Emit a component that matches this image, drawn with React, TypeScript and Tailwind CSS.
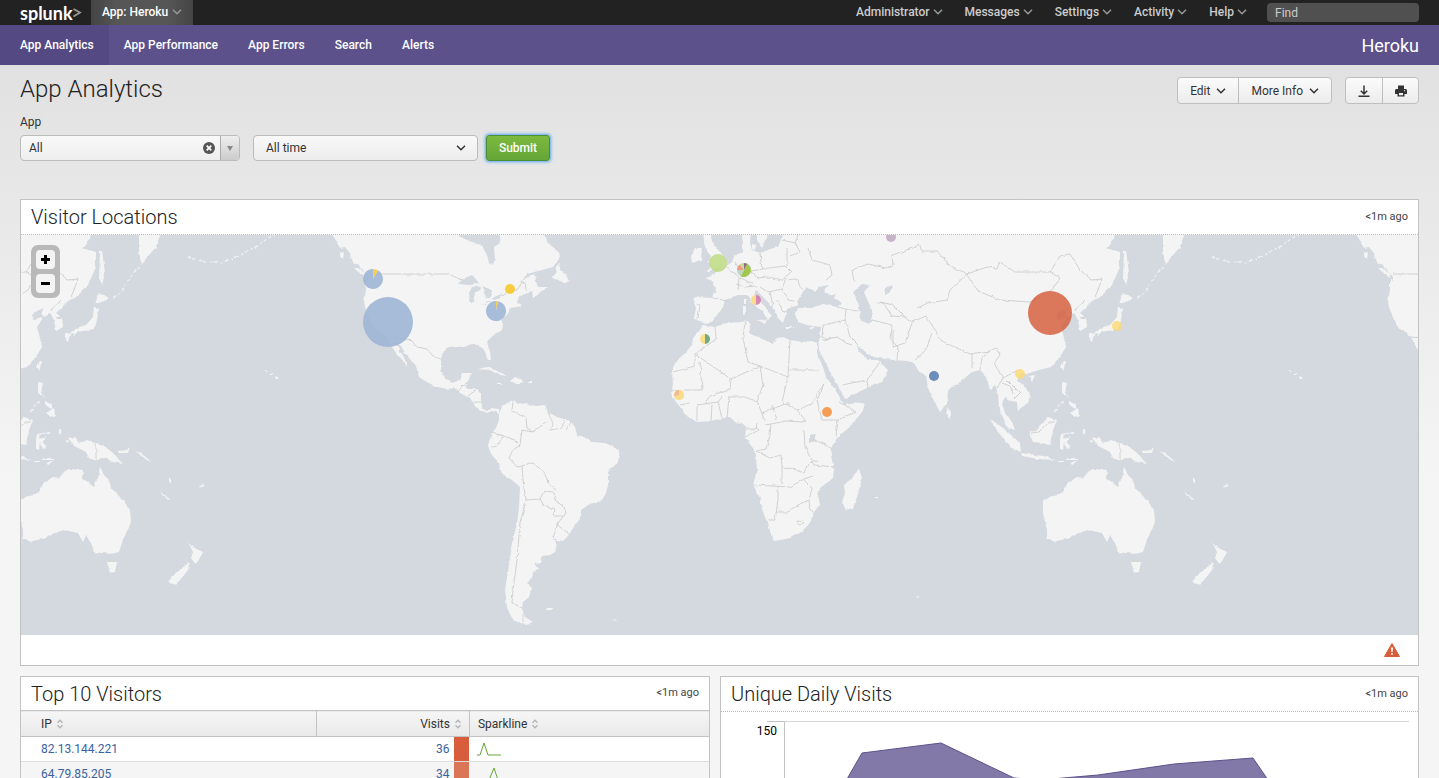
import React from "react";

const LAND = [
  // North and Central America
  "M325 225L333 235L337 243L340 248L345 247L349 252L353 262L359 266L363 270L366 275L366 290L364 302L366 310L370 320L377 330L382 332L387 337L391 345L394 350L397 355L402 360L407 367L406 362L402 354L398 347L395 342L398 343L402 348L408 357L416 366L419 377L427 382L437 387L447 389L455 388L460 393L468 397L473 402L476 407L482 411L487 413L492 411L496 412L499 414L499 409L491 408L487 411L482 407L481 400L481 393L477 389L468 389L465 387L468 380L472 373L463 373L460 380L452 383L445 378L441 370L441 360L443 352L450 347L463 347L472 344L482 346L485 352L488 360L491 359L490 352L487 342L492 336L502 330L503 325L502 318L507 315L510 308L517 307L522 305L517 302L519 297L525 294L532 292L533 297L540 293L548 287L542 287L536 285L535 280L538 277L533 275L526 278L519 285L527 274L542 270L553 267L558 260L560 255L553 247L547 242L543 225Z",
  "M558 263L556 273L551 279L560 280L567 283L569 281L565 273L561 270Z",
  "M354 268L358 268L369 276L369 280L363 276Z",
  "M340 251L344 253L343 259L340 255Z",
  "M478 369L487 367L497 371L507 376L499 375L490 370Z",
  "M510 381L515 377L520 379L524 382L516 384Z",
  "M497 383h5v1h-5ZM528 382h4v1h-4Z",
  // South America
  "M499 413L502 407L508 402L514 400L518 403L525 404L537 406L545 405L548 412L557 417L570 421L575 427L577 435L585 437L593 442L605 443L612 446L618 450L620 455L618 462L608 472L608 485L606 493L602 500L588 505L581 510L581 518L575 525L568 536L563 541L557 540L553 538L557 545L555 552L550 555L542 556L542 562L534 563L538 569L533 572L532 578L527 583L532 588L529 597L523 602L522 608L525 617L533 622L525 625L513 620L507 608L505 590L507 577L510 560L511 548L517 523L519 507L520 487L512 480L503 475L498 463L490 452L488 445L492 433L496 428L499 420Z",
  "M547 608h7l-3 2l-5 0ZM612 618l4 2l1 2Z",
  // Africa
  "M703 325L715 327L727 323L740 322L748 321L750 328L749 333L760 338L773 344L777 338L783 337L790 340L803 342L812 341L817 343L817 353L823 367L826 377L832 385L837 393L842 401L845 405L855 403L864 402L862 412L852 425L837 438L830 450L832 460L834 470L833 478L820 488L818 495L820 505L813 513L810 523L800 533L790 538L775 541L771 535L768 523L763 513L760 498L753 485L757 470L756 455L753 448L745 438L746 427L742 423L735 422L730 417L723 418L710 421L697 422L688 417L680 407L673 398L671 393L673 385L672 372L675 363L685 353L692 345L693 338L700 330Z",
  "M859 469L862 478L857 497L853 508L846 510L842 502L845 493L844 485L852 478Z",
  // Europe and Asia
  "M695 297L713 298L716 288L713 282L706 278L712 276L715 273L725 267L732 262L735 255L743 252L743 243L742 237L745 225L751 225L750 243L752 250L760 253L773 248L778 247L782 237L783 225L1118 225L1115 235L1110 245L1105 248L1120 252L1120 267L1112 285L1100 297L1092 301L1085 308L1080 313L1086 318L1087 327L1080 331L1078 320L1074 313L1067 317L1066 308L1061 311L1056 315L1058 320L1067 318L1061 327L1064 338L1066 347L1059 358L1051 367L1043 369L1032 372L1027 375L1020 374L1017 380L1023 385L1030 395L1028 403L1018 410L1017 403L1012 402L1005 397L1002 403L1005 413L1012 422L1015 430L1007 427L1003 417L999 408L998 393L995 385L990 390L988 382L983 373L980 370L972 372L960 382L948 390L947 403L940 412L935 403L928 388L926 375L920 373L915 365L908 361L893 360L873 357L860 348L856 345L862 355L868 360L878 360L888 370L882 382L867 388L845 399L842 393L833 377L823 358L818 348L819 342L821 327L807 325L798 322L795 313L797 308L812 308L823 304L837 307L842 303L830 295L824 291L828 285L819 287L815 292L807 287L803 292L798 300L798 305L793 307L787 310L785 317L783 323L778 318L775 310L767 301L760 294L757 290L754 295L763 305L772 315L767 320L763 312L753 303L747 295L738 295L732 297L725 300L723 307L717 315L712 322L703 323L694 318L696 308L693 300Z",
  "M703 225L712 225L711 238L715 247L722 254L726 260L725 267L716 269L706 272L712 266L708 262L711 256L706 250L704 243Z",
  "M695 248L702 248L701 260L692 263L691 256Z",
  "M757 225L772 225L768 236L762 247L757 240ZM752 244l4 1l-1 5l-3 -1Z",
  "M743 306l3 0l0 7l-3 1ZM744 299l2 0l0 5l-2 -1ZM758 320l9 -1l-2 5ZM785 327h9v1h-8ZM809 328l6 -2l-3 4Z",
  "M1124 250L1126 250L1129 273L1126 285L1123 279Z",
  "M1123 293L1133 298L1126 302L1119 304Z",
  "M1118 307L1123 308L1121 320L1118 329L1107 331L1093 334L1100 328L1110 325L1117 317Z",
  "M1089 333l5 1l-2 8l-3 -3ZM1097 332l5 0l-4 3Z",
  "M1163 225L1163 250L1165 265L1173 255L1180 247L1184 235L1183 225Z",
  "M1064 361l2 0l-3 10l-3 -4ZM1029 376l6 -1l-3 7ZM948 407l4 7l-3 4l-3 -4Z",
  // South-east Asia
  "M990 419L1002 427L1020 443L1021 452L1012 448L998 432Z",
  "M1021 453L1043 456L1057 460L1037 459L1022 456Z",
  "M1029 432L1036 431L1048 417L1057 420L1053 430L1050 445L1043 443L1033 442Z",
  "M1062 382L1067 383L1065 393L1070 398L1062 393ZM1070 413L1078 408L1079 417L1074 416Z",
  "M1069 400l3 3l4 1l0 5l-4 -2l-3 -3Z",
  "M1061 434l13 -2l0 2l-11 1l1 4l6 -2l-3 4l3 7l-3 1l-3 -7l-1 7l-3 0l0 -9Z",
  "M1092 438L1099 437L1104 443L1111 440L1127 445L1137 453L1147 464L1137 462L1127 457L1120 461L1113 458L1110 452L1098 446Z",
  "M1142 451l9 -1l3 -4l-2 7l-9 0ZM1159 450l5 3l6 4l6 6l-5 -3l-6 -4ZM1083 429l2 0l-1 6l-1 -1ZM1058 461h7v1h-7ZM1066 459h12v1h-12ZM1070 463l8 -3l-5 4Z",
  // Oceania
  "M1043 500L1052 497L1063 492L1068 483L1077 477L1083 478L1088 472L1093 469L1107 470L1106 478L1118 486L1122 478L1124 466L1128 475L1133 480L1135 488L1147 500L1154 510L1155 522L1147 540L1143 552L1133 554L1118 552L1115 543L1110 535L1107 542L1102 533L1088 530L1073 535L1068 538L1055 542L1047 538L1047 530L1043 513Z",
  "M1131 562L1141 562L1139 572L1134 573Z",
  "M1211 540L1216 547L1227 552L1220 565L1215 558L1217 552Z",
  "M1214 562L1212 570L1200 585L1193 583L1195 578L1207 567Z",
  "M1185 493l9 6l-1 1l-8 -6ZM1223 486l4 -2l1 2l-4 2ZM1193 477l2 3l0 4l-2 -3ZM877 379h2v1h-2ZM875 496h3v1h-3ZM915 597h4v1h-3Z",
  "M1299 376l3 1l0 2l-2 0ZM1289 370h2v1h-2ZM1294 373h3v1h-3Z",
];

const WATER = [
  "M455 225L457 235L467 240L482 246L487 255L489 263L493 264L495 260L494 247L500 243L501 225Z",
  "M457 284L465 278L472 275L479 283L470 285Z",
  "M470 304L469 292L472 287L481 286L480 291L475 292L473 302Z",
  "M482 286L492 290L491 295L486 299L485 291ZM481 305L489 301L492 301L485 304ZM492 298L502 294L501 298L493 300Z",
  "M853 292L862 284L870 285L864 292L867 299L872 310L872 322L866 323L860 320L859 305Z",
  "M885 289l6 -4l1 3l-3 5l-4 2ZM809 435l7 -1l-2 7l-5 2ZM836 294l-7 2l4 3Z",
];

const BORDERS = [
  "M369 274H449L457 278L463 280M502 296L508 292L518 289L521 283L525 282L526 291",
  "M387 337L401 338L411 340L417 347L427 349L434 357L441 359M458 392L463 385L467 383M468 396L476 390M474 402L481 402",
  "M513 402L512 411L526 418L527 428L533 432L545 423L548 422M548 412L553 424L551 430L562 428L564 421M566 430L571 421M533 432L522 430L520 445L513 450L509 458L517 467L522 466L523 480L526 500L540 499L544 491L554 492L555 500L564 507L566 513L558 523L553 538M522 466L532 462L546 474L548 483L556 490M540 499L544 506L555 510L553 516L563 516M556 524L569 534M526 501L520 523L517 560L513 590L512 603L522 608M492 432L504 436L515 440L520 445M504 436L497 446L491 447M523 613L523 622",
  "M715 327L716 339L695 354L695 366L673 372M695 354L731 379L760 366L788 377L790 340M790 370H819M700 362L702 390H684M731 379L730 389L710 396L704 404L696 405M745 322L743 338L748 362L760 366M760 366L763 385L757 402L762 413L785 404L790 404M788 377L782 402L797 410L812 404L818 392L824 385M757 402L745 397L729 397L727 418M722 418L718 402M697 421L697 405M711 421L712 405M704 404L718 402L722 397M745 437L759 430L756 427M746 429H756L757 423M762 413L765 425L771 424L785 421L802 422L806 421L797 410M824 385L817 400L822 420L838 420L856 412L840 402M838 420L836 436M756 451L766 449L770 435L771 424M756 451L770 458L781 455L782 467L793 469L804 473L808 463L818 461M804 430L805 447L814 465L834 467M813 439L831 448M753 485L790 487L804 479L813 476M782 467V484M778 487V500L775 520H768M776 512L788 512L800 504L809 500L812 488L804 480M809 500L810 509L813 513M798 521l5 1l-3 4l-3 -2ZM772 405L777 420M680 405L690 403M671 390L682 391",
  "M697 303L700 305L698 318M713 298L727 301M725 266L739 277L738 291M739 277L753 284M735 262L740 270M760 253L762 269L752 271L757 278L768 277L782 280L791 272L785 266L762 269M787 248L787 266M782 240L795 243L800 252L790 256M795 243L800 230M808 248L812 260L830 265L832 275L826 280M785 281L782 289L768 292M782 289L788 300L799 302M770 292L773 306M777 300L783 312L790 308M782 280L797 279L802 290M737 284L745 287L757 286M760 287L768 292M837 307L846 309L845 320L823 325M846 309L858 311M845 320L850 337L858 345M823 340L837 337L846 343L852 345M842 385L867 380L868 388M867 380L880 362M823 325L822 337L829 340M872 320L892 325L891 340L898 347L897 360M877 303L883 303L892 316L905 317M854 282L852 270L868 264L886 268L893 265L892 255L905 251L919 245L922 251L937 251L949 265L967 274L987 267L997 268L1000 262L1015 272L1050 272L1060 278L1052 290L1030 302L1000 300L978 291L967 274M967 274L950 290L947 300L928 303L917 308M880 302L893 305L904 316L912 322L926 316L933 327L940 340L950 345L970 354L990 351L996 348L1000 355M893 330L893 347L905 343L912 323M915 360L926 350L932 333M972 354L972 368M980 370L982 358L990 351M1000 355L994 363L998 370L1003 378L997 388M1003 378L1018 370M1007 380L1020 393L1013 400M1002 383L1010 386L1013 393M1050 272L1060 256L1070 254L1080 270L1092 280L1102 279L1098 290L1095 297M1085 301L1075 310M1080 318L1086 317",
  "M1031 433L1039 432L1048 422L1055 422M1120 443V461",
];

const ISLANDS = "M1300 233L1283 245L1263 256L1247 262L1230 262L1210 257M1137 298L1145 292L1158 272L1165 266M1054 412L1060 405L1064 400M1090 440L1096 444";

function World({ dx }: { dx: number }) {
  return (
    <g transform={`translate(${dx} 0)`}>
      <g filter="url(#coast)">
        <path d={LAND.join("")} fill="#f4f4f4" />
        <path d={WATER.join("")} fill="#d4d8df" />
        <path d={BORDERS.join("")} fill="none" stroke="#cdcdcd" strokeWidth="0.9" />
        <path d={ISLANDS} fill="none" stroke="#eff0f2" strokeWidth="1.5" strokeDasharray="4 2 2 3" />
      </g>
    </g>
  );
}

type Slice = [number, string];

function Pie({ x, y, r, slices, opacity = 0.85 }: { x: number; y: number; r: number; slices: Slice[]; opacity?: number }) {
  if (slices.length === 1) return <circle cx={x} cy={y} r={r} fill={slices[0][1]} fillOpacity={opacity} />;
  let start = 0;
  return (
    <g fillOpacity={opacity}>
      {slices.map(([share, color], i) => {
        const a = start * 2 * Math.PI;
        start += share;
        const b = start * 2 * Math.PI;
        const d = `M${x} ${y}L${x + r * Math.sin(a)} ${y - r * Math.cos(a)}A${r} ${r} 0 ${share > 0.5 ? 1 : 0} 1 ${x + r * Math.sin(b)} ${y - r * Math.cos(b)}Z`;
        return <path key={i} d={d} fill={color} />;
      })}
    </g>
  );
}

const YELLOW = "#fcd975";
const BLUE = "#a0b6d5";
const MARKERS: { x: number; y: number; r: number; slices: Slice[]; opacity?: number }[] = [
  { x: 373, y: 279, r: 10, slices: [[0.09, "#f3cb4d"], [0.91, BLUE]], opacity: 0.92 },
  { x: 388, y: 322, r: 25, slices: [[1, BLUE]], opacity: 0.92 },
  { x: 496, y: 311, r: 10, slices: [[0.03, "#f3cb4d"], [0.97, BLUE]], opacity: 0.92 },
  { x: 510, y: 289, r: 5, slices: [[1, "#fac61c"]] },
  { x: 718, y: 263, r: 9, slices: [[1, "#bedb81"]] },
  { x: 744, y: 270, r: 7, slices: [[0.08, "#87597a"], [0.5, "#9ac23c"], [0.17, "#b5d5c0"], [0.15, "#f0917a"], [0.1, "#bedb81"]], opacity: 0.9 },
  { x: 756, y: 300, r: 5, slices: [[0.5, "#d377ac"], [0.5, YELLOW]] },
  { x: 705, y: 339, r: 5, slices: [[0.5, "#5aa06d"], [0.5, YELLOW]] },
  { x: 679, y: 395, r: 5, slices: [[0.7, YELLOW], [0.3, "#f7ae76"]] },
  { x: 827, y: 412, r: 5, slices: [[1, "#f58f39"]] },
  { x: 891, y: 237, r: 5, slices: [[1, "#bda7bf"]] },
  { x: 934, y: 376, r: 5, slices: [[1, "#5479af"]] },
  { x: 1020, y: 374, r: 5, slices: [[1, YELLOW]] },
  { x: 1117, y: 326, r: 5, slices: [[1, YELLOW]] },
  { x: 1050, y: 313, r: 22, slices: [[1, "#d65d3a"]], opacity: 0.82 },
];

function Chevron({ className = "" }: { className?: string }) {
  return (
    <svg viewBox="0 0 10 6" className={`h-[6px] w-[10px] shrink-0 ${className}`} fill="none" stroke="currentColor" strokeWidth="1.5" aria-hidden="true">
      <path d="M1 0.8L5 4.8L9 0.8" />
    </svg>
  );
}

function SortIcon() {
  return (
    <svg viewBox="0 0 8 10" className="h-[10px] w-[8px]" fill="none" stroke="#b5b5b5" strokeWidth="1.4" aria-hidden="true">
      <path d="M1.5 3.7L4 1.2L6.5 3.7M1.5 6.3L4 8.8L6.5 6.3" />
    </svg>
  );
}

function PanelHeader({ title, ruled = true }: { title: string; ruled?: boolean }) {
  return (
    <div className={`flex items-center justify-between px-[10px] ${ruled ? "h-[35px] border-b border-dotted border-[#b8b8b8]" : "h-[33px]"}`}>
      <h2 className="text-[20px] leading-6 font-light text-[#222]">{title}</h2>
      <span className="text-[11px] text-[#444]">&lt;1m ago</span>
    </div>
  );
}

const MENUS = ["Administrator", "Messages", "Settings", "Activity", "Help"];
const TABS = ["App Performance", "App Errors", "Search", "Alerts"];
const VISITORS = [
  { ip: "82.13.144.221", visits: 36, heat: "bg-[#d85d3c]", row: "bg-white", line: "M0 13H3L7 1L11 13H24" },
  { ip: "64.79.85.205", visits: 34, heat: "bg-[#db7558]", row: "bg-[#f5f5f5]", line: "M0 13H12L17 1L21 13H24" },
];

export default function App() {
  return (
    <div className="flex h-screen flex-col overflow-hidden bg-[#f5f5f5] bg-[linear-gradient(#dedede,#f5f5f5_480px)] font-[Roboto,sans-serif] text-[12px] text-[#333]">
      <header className="flex h-[25px] shrink-0 items-center justify-between bg-[#222] pr-5 pl-5">
        <div className="flex h-full items-center">
          <a href="#home" aria-label="splunk" className="flex h-full w-[71px] items-center text-white">
            <span className="font-[Lato,sans-serif] text-[18px] leading-5 font-bold">splunk</span>
            <svg viewBox="0 0 9 11" className="h-[11px] w-[9px] shrink-0" fill="none" stroke="#999" strokeWidth="1.8" aria-hidden="true">
              <path d="M0.5 2L7 5.5L0.5 9.5" />
            </svg>
          </a>
          <button type="button" className="flex h-full items-center gap-1 bg-[linear-gradient(90deg,#444,#565656_25%,#565656_75%,#444)] px-[11px] pb-px font-medium text-white">
            App: Heroku <Chevron className="text-[#999]" />
          </button>
        </div>
        <div className="flex items-center gap-5">
          <div className="flex items-center gap-[22px] pb-[2px]">
            {MENUS.map((m) => (
              <button key={m} type="button" className="flex items-center gap-[3px] font-medium text-[#ccc]">
                {m} <Chevron className="text-[#999]" />
              </button>
            ))}
          </div>
          <input aria-label="Find" placeholder="Find" className="h-[19px] w-[152px] rounded-[4px] bg-[#505050] px-2 text-[12px] text-white placeholder:text-[#ccc]" />
        </div>
      </header>

      <nav className="flex h-10 shrink-0 items-center bg-[#5c518b] text-white">
        <a href="#analytics" className="flex h-full items-center bg-[#544982] pr-[15px] pl-5 font-medium">App Analytics</a>
        {TABS.map((t) => (
          <a key={t} href="#tab" className="px-[15px] font-medium">{t}</a>
        ))}
        <span className="ml-auto pr-5 text-[18px]">Heroku</span>
      </nav>

      <main className="px-5">
        <div className="flex items-start justify-between pt-3">
          <h1 className="text-[24px] leading-6 font-light text-[#222]">App Analytics</h1>
          <div className="flex gap-[13px]">
            <div className="flex h-[27px] overflow-hidden rounded-[4px] border border-[#bfbfbf] bg-linear-to-b from-[#fbfbfb] to-[#ececec]">
              <button type="button" className="flex items-center gap-[6px] px-3">Edit <Chevron /></button>
              <button type="button" className="flex items-center gap-[6px] border-l border-[#bfbfbf] px-3">More Info <Chevron /></button>
            </div>
            <div className="flex h-[27px] overflow-hidden rounded-[4px] border border-[#bfbfbf] bg-linear-to-b from-[#fbfbfb] to-[#ececec]">
              <button type="button" aria-label="Export" className="flex w-9 items-center justify-center">
                <svg viewBox="0 0 12 12" className="size-3" fill="none" stroke="#333" strokeWidth="1.5" aria-hidden="true">
                  <path d="M6 0.5V9M2.8 5.8L6 9L9.2 5.8M0.5 11.2H11.5" />
                </svg>
              </button>
              <button type="button" aria-label="Print" className="flex w-9 items-center justify-center border-l border-[#bfbfbf]">
                <svg viewBox="0 0 12 12" className="size-3" fill="#333" aria-hidden="true">
                  <path fillRule="evenodd" d="M3 0.5H9V4H11L12 5V9H9.5V11.5H2.5V9H0V5L1 4H3ZM4 8V10.2H8V8ZM9 5.2V6.2H10.2V5.2Z" />
                </svg>
              </button>
            </div>
          </div>
        </div>

        <form className="mt-[9px] h-[86px]" onSubmit={(e) => e.preventDefault()}>
          <label htmlFor="app" className="block h-[22px] leading-[18px]">App</label>
          <div className="flex items-center">
            <div className="flex h-[26px] w-[220px] items-center overflow-hidden rounded-[4px] border border-[#bbb] bg-linear-to-b from-[#f9f9f9] to-[#eee]">
              <input id="app" defaultValue="All" className="min-w-0 flex-1 bg-transparent px-2 text-[12px]" />
              <button type="button" aria-label="Clear" className="mr-[5px]">
                <svg viewBox="0 0 12 12" className="size-3" aria-hidden="true">
                  <circle cx="6" cy="6" r="6" fill="#555" />
                  <path d="M3.7 3.7L8.3 8.3M8.3 3.7L3.7 8.3" stroke="#fff" strokeWidth="1.8" />
                </svg>
              </button>
              <button type="button" aria-label="Show options" className="flex h-full w-[19px] items-center justify-center border-l border-[#aaa] bg-linear-to-b from-[#eee] to-[#ccc]">
                <svg viewBox="0 0 6 5" className="h-[5px] w-[6px]" fill="#888" aria-hidden="true"><path d="M0 0H6L3 5Z" /></svg>
              </button>
            </div>
            <div className="relative ml-[13px] w-[225px]">
              <select aria-label="Time range" className="h-[26px] w-full appearance-none rounded-[4px] border border-[#bbb] bg-linear-to-b from-[#f9f9f9] to-[#ececec] px-3 text-[12px]">
                <option>All time</option>
              </select>
              <Chevron className="pointer-events-none absolute top-[10px] right-3" />
            </div>
            <button type="submit" className="ml-2 h-[26px] w-16 rounded-[3px] border border-[#4c8c3a] bg-linear-to-b from-[#7cb93e] to-[#65a637] font-medium text-white shadow-[0_0_3px_1px_#52a8ec]">Submit</button>
          </div>
        </form>

        <section className="border border-[#c3c3c3] bg-white">
          <PanelHeader title="Visitor Locations" />
          <div className="relative">
            <svg viewBox="21 235 1397 400" preserveAspectRatio="xMidYMid slice" className="block h-[400px] w-full bg-[#d4d8df]" role="img" aria-label="Map of visitor locations">
              <defs>
                <filter id="coast" filterUnits="userSpaceOnUse" x="160" y="225" width="1160" height="410">
                  <feTurbulence type="fractalNoise" baseFrequency="0.18" numOctaves="2" seed="4" />
                  <feDisplacementMap in="SourceGraphic" scale="3" xChannelSelector="R" yChannelSelector="G" />
                </filter>
              </defs>
              <World dx={-1024} />
              <World dx={1024} />
              <World dx={0} />
              {MARKERS.map((m) => <Pie key={`${m.x}-${m.y}`} {...m} />)}
            </svg>
            <div className="absolute top-[10px] left-[10px] flex flex-col gap-[5px] rounded-[7px] bg-[#b9b9b9] p-[5px]">
              {["+", "−"].map((s) => (
                <button key={s} type="button" aria-label={s === "+" ? "Zoom in" : "Zoom out"} className="flex size-[19px] items-center justify-center rounded-[4px] bg-[#f4f4f4]">
                  <svg viewBox="0 0 9 9" className="size-[9px]" fill="#000" aria-hidden="true">
                    <path d={s === "+" ? "M3 0H6V3H9V6H6V9H3V6H0V3H3Z" : "M0 3H9V6H0Z"} />
                  </svg>
                </button>
              ))}
            </div>
          </div>
          <div className="flex h-[30px] items-center justify-end pr-[18px]">
            <svg viewBox="0 0 16 14" className="h-[14px] w-4" role="img" aria-label="Warning">
              <path d="M8 0.5L15.5 13.5H0.5Z" fill="#d65d3a" stroke="#d65d3a" strokeLinejoin="round" />
              <path d="M7 4.5H9L8.6 9H7.4ZM7.2 10H8.8V11.8H7.2Z" fill="#fff" />
            </svg>
          </div>
        </section>

        <div className="mt-[10px] grid grid-cols-[690fr_699fr] gap-[10px]">
          <section className="border border-[#c3c3c3] bg-white">
            <PanelHeader title="Top 10 Visitors" ruled={false} />
            <table className="w-full table-fixed border-collapse">
              <colgroup>
                <col className="w-[43%]" />
                <col className="w-[20%]" />
                <col className="w-[15px]" />
                <col />
              </colgroup>
              <thead>
                <tr className="h-[26px] border-t border-b border-[#c3c3c3] bg-linear-to-b from-[#f6f6f6] to-[#e9e9e9]">
                  <th scope="col" className="border-r border-[#c3c3c3] pl-5 text-left font-normal"><span className="flex items-center gap-1">IP <SortIcon /></span></th>
                  <th scope="col" colSpan={2} className="border-r border-[#c3c3c3] pr-[7px] font-normal"><span className="flex items-center justify-end gap-1">Visits <SortIcon /></span></th>
                  <th scope="col" className="pl-2 text-left font-normal"><span className="flex items-center gap-1">Sparkline <SortIcon /></span></th>
                </tr>
              </thead>
              <tbody>
                {VISITORS.map((v) => (
                  <tr key={v.ip} className={`h-[25px] border-b border-[#ddd] ${v.row}`}>
                    <td className="pl-5"><a href="#ip" className="text-[#3863a0]">{v.ip}</a></td>
                    <td className="pr-[5px] text-right text-[#3863a0]">{v.visits}</td>
                    <td className={v.heat}></td>
                    <td className="pl-2">
                      <svg viewBox="0 0 24 14" className="h-[14px] w-6" fill="none" stroke="#65a637" aria-hidden="true"><path d={v.line} /></svg>
                    </td>
                  </tr>
                ))}
              </tbody>
            </table>
          </section>
          <section className="border border-[#c3c3c3] bg-white">
            <PanelHeader title="Unique Daily Visits" />
            <svg viewBox="721 712 697 100" className="block w-full" role="img" aria-label="Unique daily visits">
              <path d="M767 721.5H1409" stroke="#d9d9d9" />
              <path d="M767 721.5H784.5V812" stroke="#c3c3c3" fill="none" />
              <text x="777" y="735" textAnchor="end" fontSize="12" fill="#000">150</text>
              <path d="M828 812L862 753L941 743L1014 778L1040 780L1098 775L1174 764L1253 758L1290 812Z" fill="#8279a8" />
              <path d="M828 812L862 753L941 743L1014 778L1040 780L1098 775L1174 764L1253 758L1290 812" fill="none" stroke="#5c518b" />
            </svg>
          </section>
        </div>
      </main>
    </div>
  );
}
